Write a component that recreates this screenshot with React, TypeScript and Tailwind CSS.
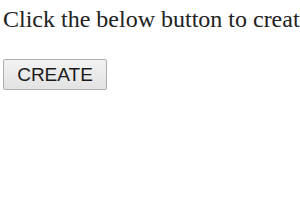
export default function App() {
  return (
    <div className="h-[210px] w-[300px] overflow-hidden bg-white pl-[3px] pt-[6px]">
      <p className="whitespace-nowrap font-['Liberation_Serif',serif] text-[24px] leading-[27px] text-[#222]">
        Click the below button to create a new element
      </p>
      <button
        type="button"
        className="mt-[26px] h-[31px] w-[104px] rounded-[2px] border border-[#adadad] bg-gradient-to-b from-[#f2f2f2] to-[#e2e2e2] font-['Liberation_Sans',sans-serif] text-[19px] leading-none text-[#1a1a1a]"
      >
        CREATE
      </button>
    </div>
  );
}
